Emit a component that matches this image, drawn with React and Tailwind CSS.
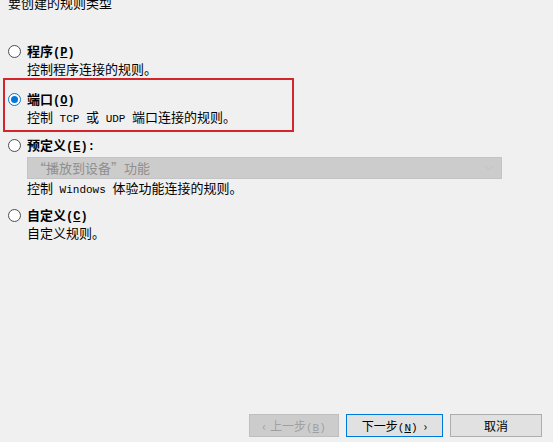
import React from "react";

const cjk = { fontFamily: '"Noto Sans CJK SC", "Noto Sans", sans-serif' };

function Mono({ children, size = "text-[12px]" }) {
  return (
    <span className={`font-['Liberation_Mono',monospace] leading-none ${size}`}>
      {children}
    </span>
  );
}

function Radio({ checked }) {
  return (
    <div className="h-[18px] w-[13px] flex items-center shrink-0">
      {checked ? (
        <div className="w-[13px] h-[13px] rounded-full border border-[#0078d7] bg-white flex items-center justify-center">
          <div className="w-[7px] h-[7px] rounded-full bg-[#0078d7]" />
        </div>
      ) : (
        <div className="w-[13px] h-[13px] rounded-full border border-[#4d4d4d] bg-white" />
      )}
    </div>
  );
}

function Line({ children, className = "" }) {
  return (
    <div className={`h-[18px] leading-[18px] whitespace-nowrap ${className}`}>
      {children}
    </div>
  );
}

function Option({ checked, title, hotkey, colon, children }) {
  return (
    <div className="flex gap-[6px] pl-[8px]">
      <Radio checked={checked} />
      <div className="flex flex-col">
        <Line className="font-bold">
          {title}
          <Mono>
            (<span className="underline">{hotkey}</span>)
          </Mono>
          {colon && <Mono>:</Mono>}
        </Line>
        {children}
      </div>
    </div>
  );
}

export default function App() {
  return (
    <div
      className="relative w-[553px] h-[442px] overflow-hidden bg-[#f0f0f0] text-[13px] text-black flex flex-col"
      style={cjk}
    >
      <div className="pl-[8px] -mt-[5px] h-[16px] leading-[16px]">要创建的规则类型</div>

      <div className="mt-[31px] flex flex-col">
        <Option title="程序" hotkey="P">
          <Line>控制程序连接的规则。</Line>
        </Option>

        <div className="mt-[12px]">
          <Option checked title="端口" hotkey="O">
            <Line>
              控制<Mono size="text-[11px]"> TCP </Mono>或
              <Mono size="text-[11px]"> UDP </Mono>端口连接的规则。
            </Line>
          </Option>
        </div>

        <div className="mt-[10px]">
          <Option title="预定义" hotkey="E" colon>
            <div className="w-[475px] h-[22px] mt-[3px] bg-[#cccccc] border border-[#c4c4c4] flex items-center justify-between pl-[5px] pr-[8px] text-[#8f8f8f]">
              <span className="leading-[18px]">“播放到设备”功能</span>
              <svg width="8" height="5" viewBox="0 0 8 5" fill="none">
                <path d="M0.5 0.5 L4 4 L7.5 0.5" stroke="#c2c2c2" strokeWidth="1" />
              </svg>
            </div>
            <Line>
              控制<Mono size="text-[11px]"> Windows </Mono>体验功能连接的规则。
            </Line>
          </Option>
        </div>

        <div className="mt-[9px]">
          <Option title="自定义" hotkey="C">
            <Line>自定义规则。</Line>
          </Option>
        </div>
      </div>

      <div className="mt-auto mb-[5px] pr-[11px] flex justify-end gap-[7px] text-[12px]">
        <button className="w-[90px] h-[23px] bg-[#cccccc] border border-[#bfbfbf] text-[#a0a0a0] flex items-center justify-center gap-[4px]">
          <span>‹</span>
          <span>
            上一步<Mono size="text-[11px]">(<span className="underline">B</span>)</Mono>
          </span>
        </button>
        <button className="w-[97px] h-[23px] bg-[#e1e1e1] border border-[#0078d7] flex items-center justify-center gap-[6px]">
          <span>
            下一步<Mono size="text-[11px]">(<span className="underline">N</span>)</Mono>
          </span>
          <span>›</span>
        </button>
        <button className="w-[92px] h-[23px] bg-[#e1e1e1] border border-[#adadad] flex items-center justify-center">
          取消
        </button>
      </div>

      <div className="absolute left-[3px] top-[78px] w-[291px] h-[54px] border-2 border-[#d4242c] pointer-events-none" />
    </div>
  );
}
